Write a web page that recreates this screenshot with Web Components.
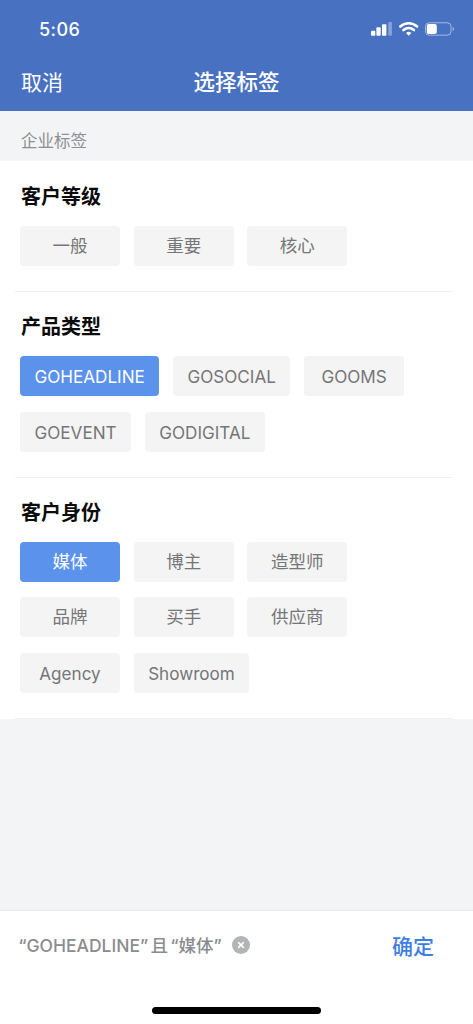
<!DOCTYPE html>
<html lang="zh">
<head>
<meta charset="utf-8">
<title>选择标签</title>
<style>
  html, body { margin: 0; padding: 0; }
  body {
    width: 473px;
    height: 1024px;
    overflow: hidden;
    display: flex;
    flex-direction: column;
    background: #f3f4f6;
    font-family: Inter, "Noto Sans CJK SC", sans-serif;
  }
  #panel-wrap { background: #fff; padding-top: .9px; }
  #spacer { flex: 1; }
</style>
</head>
<body>
  <app-header title-text="选择标签" back-text="取消" time="5:06"></app-header>
  <section-label>企业标签</section-label>
  <div id="panel-wrap">
    <tag-group name="客户等级">
      <tag-chip zh>一般</tag-chip>
      <tag-chip zh>重要</tag-chip>
      <tag-chip zh>核心</tag-chip>
    </tag-group>
    <tag-group name="产品类型">
      <tag-chip selected>GOHEADLINE</tag-chip>
      <tag-chip>GOSOCIAL</tag-chip>
      <tag-chip>GOOMS</tag-chip>
      <tag-chip>GOEVENT</tag-chip>
      <tag-chip>GODIGITAL</tag-chip>
    </tag-group>
    <tag-group name="客户身份">
      <tag-chip zh selected>媒体</tag-chip>
      <tag-chip zh>博主</tag-chip>
      <tag-chip zh>造型师</tag-chip>
      <tag-chip zh>品牌</tag-chip>
      <tag-chip zh>买手</tag-chip>
      <tag-chip zh>供应商</tag-chip>
      <tag-chip>Agency</tag-chip>
      <tag-chip>Showroom</tag-chip>
    </tag-group>
  </div>
  <div id="spacer"></div>
  <bottom-bar summary="“GOHEADLINE”且“媒体”" action="确定"></bottom-bar>

<script>
class AppHeader extends HTMLElement {
  constructor() {
    super();
    this._shadowDOM = this.attachShadow({ mode: 'open' });
  }

  connectedCallback() {
    this.render();
  }

  render() {
    this._shadowDOM.innerHTML = `
      <style>
        :host {
          display: block;
          height: 111px;
          background: #4872c1;
          color: #fff;
        }
        .status {
          height: 58px;
          display: flex;
          align-items: center;
          justify-content: space-between;
          padding: 0 15px 0 39px;
          box-sizing: border-box;
        }
        .time { font-size: 18px; font-weight: 500; letter-spacing: .4px; }
        .icons { display: block; }
        .nav {
          height: 53px;
          display: grid;
          grid-template-columns: 1fr auto 1fr;
          align-items: center;
          padding: 0 21px 8px;
          box-sizing: border-box;
        }
        .back { font-size: 21px; }
        .title { font-size: 21.5px; font-weight: 500; }
      </style>
      <div class="status">
        <span class="time">${this.getAttribute('time')}</span>
        <svg class="icons" width="90" height="18" viewBox="0 0 90 18">
          <rect x="3" y="10.7" width="4.3" height="5" rx=".9" fill="#fff"/>
          <rect x="8.4" y="7.3" width="4.3" height="8.4" rx=".9" fill="#fff"/>
          <rect x="14" y="4.3" width="4.4" height="11.4" rx=".9" fill="#fff"/>
          <rect x="20.3" y="2" width="3.6" height="13.7" rx=".9" fill="#fff" fill-opacity=".35"/>
          <path d="M32.3 6.5a12.5 12.5 0 0 1 16.8 0M35.5 10a7.7 7.7 0 0 1 10.4 0" fill="none" stroke="#fff" stroke-width="2.6" stroke-linecap="round"/>
          <path d="M38 12.9a4 4 0 0 1 5.4 0L40.7 15.7z" fill="#fff"/>
          <rect x="57.5" y="2.8" width="25.5" height="12.4" rx="3.6" fill="none" stroke="#fff" stroke-opacity=".5"/>
          <rect x="58.8" y="4" width="10" height="10" rx="2" fill="#fff"/>
          <path d="M84.7 7v4a2.2 2.2 0 0 0 0-4z" fill="#fff" fill-opacity=".55"/>
        </svg>
      </div>
      <div class="nav">
        <span class="back">${this.getAttribute('back-text')}</span>
        <span class="title">${this.getAttribute('title-text')}</span>
      </div>
    `;
  }
}

class SectionLabel extends HTMLElement {
  constructor() {
    super();
    this._shadowDOM = this.attachShadow({ mode: 'open' });
  }

  connectedCallback() {
    this._shadowDOM.innerHTML = `
      <style>
        :host {
          display: flex;
          align-items: center;
          height: 50px;
          padding: 7px 21px 0;
          box-sizing: border-box;
          font-size: 16.5px;
          color: #8e8f92;
        }
      </style>
      <slot></slot>
    `;
  }
}

class TagGroup extends HTMLElement {
  constructor() {
    super();
    this._shadowDOM = this.attachShadow({ mode: 'open' });
  }

  connectedCallback() {
    this._shadowDOM.innerHTML = `
      <style>
        :host { display: block; background: #fff; padding: 0 20px; }
        .inner { padding: 22.4px 0 25px; }
        h3 {
          margin: 0 0 13.7px 1px;
          height: 28px;
          line-height: 26px;
          font-size: 20px;
          font-weight: 700;
          color: #0b0b0b;
        }
        .chips { display: flex; flex-wrap: wrap; gap: 15.5px 13.67px; }
        .rule { height: 1px; background: #f0f1f2; margin: 0 0 0 -5px; }
      </style>
      <div class="inner">
        <h3>${this.getAttribute('name')}</h3>
        <div class="chips"><slot></slot></div>
      </div>
      <div class="rule"></div>
    `;
  }
}

class TagChip extends HTMLElement {
  constructor() {
    super();
    this._shadowDOM = this.attachShadow({ mode: 'open' });
  }

  connectedCallback() {
    this._shadowDOM.innerHTML = `
      <style>
        :host {
          display: flex;
          align-items: center;
          justify-content: center;
          min-width: 100px;
          height: 40px;
          padding: 1px 14.5px 0;
          box-sizing: border-box;
          border-radius: 4px;
          background: #f4f4f4;
          color: #757678;
          font-size: 17.1px;
        }
        :host([zh]) { padding: 0 14px 3px; font-size: 17.5px; }
        :host([selected]) { background: #5b92ec; color: #fff; }
      </style>
      <slot></slot>
    `;
  }
}

class BottomBar extends HTMLElement {
  constructor() {
    super();
    this._shadowDOM = this.attachShadow({ mode: 'open' });
  }

  connectedCallback() {
    const summary = this.getAttribute('summary')
      .replace(/“/g, '<span class="q">“</span>')
      .replace(/”/g, '<span class="q end">”</span>');
    this._shadowDOM.innerHTML = `
      <style>
        :host {
          display: block;
          height: 114px;
          background: #fff;
          border-top: 1px solid #e8e9eb;
          box-sizing: border-box;
          position: relative;
        }
        .row {
          height: 71px;
          display: flex;
          align-items: center;
          padding: 0 39px 4px 16px;
          box-sizing: border-box;
        }
        .summary { font-size: 17.5px; font-weight: 500; color: #8b8c8f; white-space: nowrap; }
        .q { display: inline-block; width: 10.5px; text-align: right; }
        .q.end { text-align: left; }
        .clear { margin-left: 8px; display: block; flex: none; }
        .action { margin-left: auto; font-size: 21px; font-weight: 500; color: #3f7de6; }
        .home {
          position: absolute;
          left: 152px;
          bottom: 10px;
          width: 169px;
          height: 7px;
          border-radius: 4px;
          background: #000;
        }
      </style>
      <div class="row">
        <span class="summary">${summary}</span>
        <svg class="clear" width="18" height="18" viewBox="0 0 18 18">
          <circle cx="9" cy="9" r="9" fill="#b3b4b7"/>
          <path d="M6.6 6.6l4.8 4.8M11.4 6.6l-4.8 4.8" stroke="#fff" stroke-width="1.5" stroke-linecap="round"/>
        </svg>
        <span class="action">${this.getAttribute('action')}</span>
      </div>
      <div class="home"></div>
    `;
  }
}

customElements.define('app-header', AppHeader);
customElements.define('section-label', SectionLabel);
customElements.define('tag-group', TagGroup);
customElements.define('tag-chip', TagChip);
customElements.define('bottom-bar', BottomBar);
</script>
</body>
</html>
